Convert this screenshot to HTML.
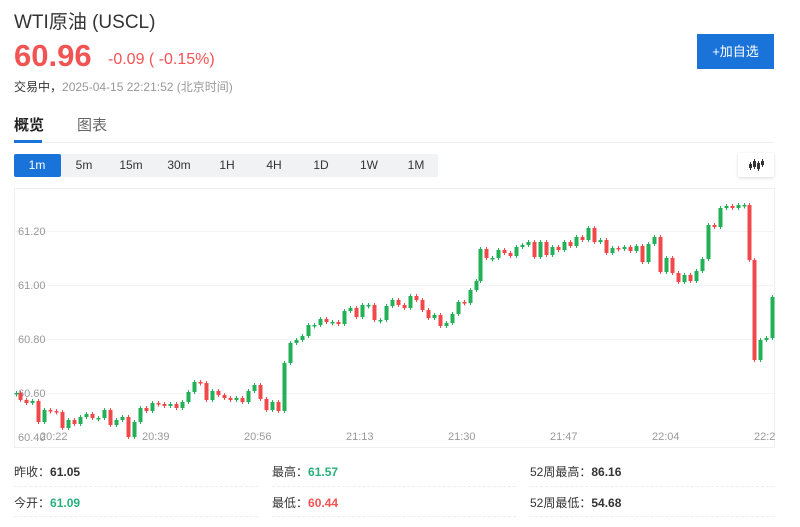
<!DOCTYPE html>
<html><head><meta charset="utf-8"><style>
*{margin:0;padding:0;box-sizing:border-box}
body{width:800px;height:527px;background:#fff;font-family:"Liberation Sans","Noto Sans CJK SC",sans-serif;color:#333;position:relative;overflow:hidden}
.a{position:absolute;white-space:nowrap}
.per{position:absolute;left:14px;top:154px;width:424px;height:23px;background:#f1f2f4;border-radius:2px}
.per span{position:absolute;top:0;height:23px;line-height:23px;font-size:12px;transform:translateX(-50%);color:#333}
.st{position:absolute;font-size:12px;color:#333}
.st b{font-weight:bold}
.dl{position:absolute;height:0;border-top:1px dashed #ececec;width:244px}
</style></head><body>
<div class="a" style="left:14px;top:7px;font-size:19px;color:#333">WTI原油 (USCL)</div>
<div class="a" style="left:14px;top:38px;font-size:31px;font-weight:bold;color:#f25353">60.96</div>
<div class="a" style="left:108px;top:51px;font-size:16px;color:#f25353">-0.09 ( -0.15%)</div>
<div class="a" style="left:14px;top:78px;font-size:12px;color:#999"><span style="color:#333">交易中，</span>2025-04-15 22:21:52 (北京时间)</div>
<div class="a" style="left:697px;top:34px;width:77px;height:35px;background:#1a73d9;color:#fff;font-size:13px;line-height:35px;text-align:center">+加自选</div>
<div class="a" style="left:14px;top:114px;font-size:15px;font-weight:bold;color:#222">概览</div>
<div class="a" style="left:77px;top:114px;font-size:15px;color:#666">图表</div>
<div class="a" style="left:14px;top:142px;width:760px;height:1px;background:#eceef1"></div>
<div class="a" style="left:14px;top:140px;width:28px;height:3px;background:#1a73d9"></div>
<div class="per">
<div style="position:absolute;left:0;top:0;width:47px;height:23px;background:#1a73d9;border-radius:2px"></div>
<span style="left:23px;color:#fff">1m</span><span style="left:70px">5m</span><span style="left:117px">15m</span><span style="left:165px">30m</span><span style="left:213px">1H</span><span style="left:260px">4H</span><span style="left:307px">1D</span><span style="left:355px">1W</span><span style="left:402px">1M</span>
</div>
<div class="a" style="left:738px;top:153px;width:36px;height:24px;background:#fff;box-shadow:0 1px 3px rgba(0,0,0,.15);border-radius:2px">
<svg width="36" height="24"><g stroke="#333" stroke-width="1"><line x1="12.5" y1="9" x2="12.5" y2="17"/><line x1="16.5" y1="6" x2="16.5" y2="16"/><line x1="20.5" y1="8" x2="20.5" y2="18"/><line x1="24.5" y1="6" x2="24.5" y2="14"/></g><g fill="#333"><rect x="11" y="11" width="3" height="4"/><rect x="15" y="8" width="3" height="6"/><rect x="19" y="10" width="3" height="6"/><rect x="23" y="8" width="3" height="4"/></g></svg></div>
<div class="a" style="left:14px;top:188px;width:761px;height:260px;border:1px solid #eef0f3"></div>
<svg id="ch" class="a" style="left:0;top:0" width="800" height="527">
<g stroke="#f3f4f6" stroke-width="1"><line x1="15" y1="231.5" x2="774" y2="231.5"/><line x1="15" y1="285.5" x2="774" y2="285.5"/><line x1="15" y1="339.5" x2="774" y2="339.5"/><line x1="15" y1="393.5" x2="774" y2="393.5"/></g>
<g font-size="11" fill="#999" font-family="Liberation Sans,sans-serif"><text x="18" y="235">61.20</text><text x="18" y="289">61.00</text><text x="18" y="343">60.80</text><text x="18" y="397">60.60</text><text x="18" y="441">60.40</text>
<text x="40" y="440">20:22</text><text x="142" y="440">20:39</text><text x="244" y="440">20:56</text><text x="346" y="440">21:13</text><text x="448" y="440">21:30</text><text x="550" y="440">21:47</text><text x="652" y="440">22:04</text><text x="754" y="440">22:2</text></g>
<g id="cd"></g>
</svg>
<div class="st" style="left:14px;top:463px">昨收：<b>61.05</b></div>
<div class="st" style="left:272px;top:463px">最高：<b style="color:#27b07a">61.57</b></div>
<div class="st" style="left:530px;top:463px">52周最高：<b>86.16</b></div>
<div class="st" style="left:14px;top:494px">今开：<b style="color:#27b07a">61.09</b></div>
<div class="st" style="left:272px;top:494px">最低：<b style="color:#f25353">60.44</b></div>
<div class="st" style="left:530px;top:494px">52周最低：<b>54.68</b></div>
<div class="dl" style="left:14px;top:486px"></div><div class="dl" style="left:272px;top:486px"></div><div class="dl" style="left:530px;top:486px"></div>
<div class="dl" style="left:14px;top:516px"></div><div class="dl" style="left:272px;top:516px"></div><div class="dl" style="left:530px;top:516px"></div>
<script>
var d=[[16,393],[20,400],[26,403],[32,401],[38,422],[44,410],[50,411],[56,412],[62,428],[68,420],[74,424],[80,417],[86,414],[92,418],[98,418],[104,410],[110,425],[116,420],[122,417],[128,437],[134,422],[140,408],[146,411],[152,403],[158,404],[164,406],[170,404],[176,408],[182,402],[188,392],[194,382],[200,383],[206,400],[212,391],[218,395],[224,398],[230,400],[236,398],[242,402],[248,391],[254,385],[260,399],[266,410],[272,402],[278,411],[284,363],[290,343],[296,340],[302,336],[308,325],[314,325],[320,319],[326,322],[332,322],[338,324],[344,311],[350,308],[356,317],[362,305],[368,305],[374,320],[380,320],[386,306],[392,300],[398,305],[404,308],[410,296],[416,300],[422,310],[428,318],[434,315],[440,326],[446,323],[452,314],[458,302],[464,303],[470,290],[476,281],[480,249],[486,258],[492,258],[498,250],[504,253],[510,256],[516,247],[522,245],[528,242],[534,257],[540,242],[546,255],[552,247],[558,250],[564,242],[570,246],[576,237],[582,240],[588,228],[594,242],[600,240],[606,253],[612,248],[618,249],[624,247],[630,251],[636,246],[642,262],[648,244],[654,237],[660,272],[666,258],[672,273],[678,282],[684,275],[690,281],[696,271],[702,259],[708,225],[714,227],[720,208],[726,206],[732,208],[738,205],[744,205],[749,260],[754,360],[760,340],[766,338],[772,297]];
var g='',p=393;
for(var i=0;i<d.length;i++){var x=d[i][0],c=d[i][1],o=p;var up=c<=o;var col=up?'#22b157':'#f0484b';var t=Math.min(o,c),h=Math.max(Math.abs(c-o),1.5);
g+='<line x1="'+(x+0.5)+'" y1="'+(t-2)+'" x2="'+(x+0.5)+'" y2="'+(t+h+2)+'" stroke="'+col+'"/><rect x="'+(x-1.5)+'" y="'+t+'" width="4" height="'+h+'" fill="'+col+'"/>';p=c;}
document.getElementById('cd').innerHTML=g;
</script>
</body></html>
